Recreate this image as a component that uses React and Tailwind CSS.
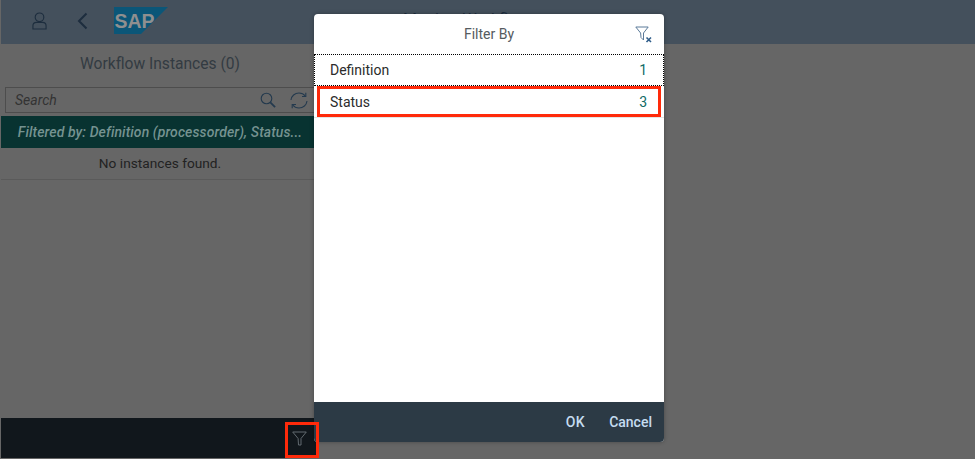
export default function App() {
  const font = { fontFamily: 'Roboto, "Liberation Sans", sans-serif' };
  return (
    <div style={font} className="relative w-[975px] h-[459px] overflow-hidden bg-[#666666] flex flex-col pl-px pb-px">
      <header className="h-[44px] shrink-0 bg-[#44505c] flex items-center relative">
        <svg className="ml-[31px] mt-[-2px]" width="15" height="20" viewBox="0 0 16 20" fill="none" stroke="#1d2d3e" strokeWidth="1.200">
          <circle cx="8" cy="6" r="4.600" />
          <path d="M1 18.500v-3.500c0-2.500 2-3.600 3.800-3.600h6.400c1.800 0 3.800 1.100 3.800 3.600v3.500z" />
        </svg>
        <svg className="ml-[30px] mt-[-3px]" width="11" height="18" viewBox="0 0 11 18" fill="none" stroke="#1d2d3e" strokeWidth="2">
          <path d="M9.500 1.500 2 9l7.500 7.500" />
        </svg>
        <svg className="ml-[26px] mt-[-4px]" width="55" height="27" viewBox="0 0 55 27">
          <path d="M0 0h54L27 27H0z" fill="#0b5678" />
          <text x="0.500" y="21" fontFamily="Liberation Sans" fontWeight="700" fontSize="21" textLength="40" lengthAdjust="spacingAndGlyphs" fill="#8f8f8f">SAP</text>
        </svg>
        <span className="absolute left-[402px] top-[8px] text-[16px] text-[#1d2d3e]">Monitor Workflows</span>
      </header>
      <div className="flex-1 flex min-h-0">
        <aside className="w-[318px] shrink-0 flex flex-col">
          <div className="h-[39px] pt-[2px] flex items-center justify-center text-[15.600px] text-[#333b42]">Workflow Instances (0)</div>
          <div className="pl-1 h-[33px] flex items-start pt-[4px]">
            <div className="flex-1 h-[26px] border border-[#4d4d4d] flex items-center pl-[9px] bg-[#666666]">
              <span className="flex-1 text-[14px] italic text-[#333]">Search</span>
              <svg className="mr-[14px]" width="16" height="16" viewBox="0 0 16 16" fill="none" stroke="#243a4e" strokeWidth="1.100">
                <circle cx="6.500" cy="6.500" r="5.300" />
                <path d="m10.300 10.300 4.800 4.800" strokeWidth="1.800" />
              </svg>
              <svg className="mr-[10px]" width="18" height="17" viewBox="0 0 18 17" fill="none" stroke="#243a4e" strokeWidth="1.100">
                <path d="M1 8C1.400 4 4.800 1 9 1c2.600 0 4.800 1.100 6.200 3" />
                <path d="M15.800.8V4.500H12" />
                <path d="M17 9c-.4 4-3.800 7-8 7-2.600 0-4.800-1.100-6.200-3" />
                <path d="M2.200 16.200V12.500H6" />
              </svg>
            </div>
          </div>
          <div className="h-[32px] bg-[#083331] flex items-center justify-center text-[14px] tracking-[0.1px] italic font-medium text-[#759290] whitespace-nowrap overflow-hidden">
            Filtered by: Definition (processorder), Status...
          </div>
          <div className="h-[32px] flex items-center justify-center text-[13.700px] text-[#222] border-b border-[#5a5a5a]">No instances found.</div>
          <div className="flex-1" />
          <footer className="h-[40px] bg-[#11171c] flex items-center justify-end pr-[11px]">
            <svg width="15" height="15" viewBox="0 0 15 15" fill="none" stroke="#626a70" strokeWidth="1" className="mr-px">
              <path d="M.7 1h13.600L9 7.500v6.500H6.500l-.4-6.500z" />
            </svg>
          </footer>
        </aside>
      </div>

      <div className="absolute left-[314px] top-[14px] w-[350px] h-[428px] bg-white rounded-[4px] shadow-[0_0_4px_rgba(0,0,0,0.3)] flex flex-col overflow-hidden">
        <div className="h-[40px] shrink-0 relative flex items-center justify-center text-[14px] text-[#555b60]">
          Filter By
          <svg className="absolute right-[11px] top-[12px]" width="18" height="17" viewBox="0 0 18 17" fill="none">
            <path d="M.8 1h12.400L8.500 7v7L6 11.500 5.600 7z" stroke="#5b7a99" strokeWidth="1" />
            <path d="m11.500 11.500 4.500 4.500M16 11.500 11.500 16" stroke="#2f5d8a" strokeWidth="1.600" />
          </svg>
        </div>
        <div className="h-[32px] shrink-0 flex items-center justify-between pl-[15px] pr-[16px] text-[14px] text-[#2b2b2b] border border-dotted border-black">
          <span>Definition</span><span className="text-[#0f6b66]">1</span>
        </div>
        <div className="h-[32px] shrink-0 flex items-center justify-between pl-[16px] pr-[17px] pt-px text-[14px] text-[#2b2b2b] border-b border-[#e5e5e5] relative">
          <span>Status</span><span className="text-[#0f6b66]">3</span>
          <div className="absolute left-[3px] right-[3px] top-0 h-[31px] border-[3px] border-[#ff2a0a]" />
        </div>
        <div className="flex-1" />
        <div className="h-[40px] shrink-0 bg-[#2c3a45] flex items-center justify-end gap-[24px] pr-[12px] text-[14px] font-medium text-[#c5dcf0]">
          <span className="tracking-[0.5px]">OK</span><span>Cancel</span>
        </div>
      </div>

      <div className="absolute left-[285px] top-[422px] w-[34px] h-[36px] border-[3px] border-[#ff2a0a]" />
    </div>
  );
}
